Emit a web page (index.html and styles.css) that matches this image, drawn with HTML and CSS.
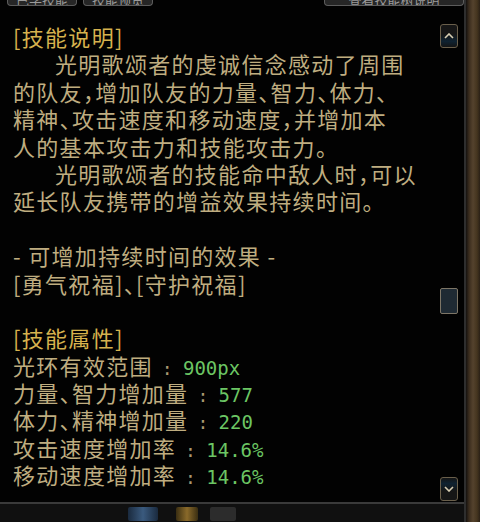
FILE: index.html
```html
<!DOCTYPE html>
<html lang="zh-CN">
<head>
    <meta charset="UTF-8">
    <meta name="viewport" content="width=device-width, initial-scale=1.0">
    <title>技能说明</title>
    <link rel="stylesheet" href="styles.css">
</head>
<body>
    <div class="window">
        <div class="panel">
            <!-- tab buttons, mostly scrolled out of view -->
            <div class="tabs">
                <div class="tab tab-small"><span>已学技能</span></div>
                <div class="tab tab-small"><span>技能预览</span></div>
                <div class="tab tab-wide"><span>查看技能树说明</span></div>
            </div>

            <div class="body">
                <div class="desc">
                    <div class="line title">[技能说明]</div>
                    <div class="line indent">光明歌颂者的虔诚信念感动了周围</div>
                    <div class="line">的队友，增加队友的力量、智力、体力、</div>
                    <div class="line">精神、攻击速度和移动速度，并增加本</div>
                    <div class="line">人的基本攻击力和技能攻击力。</div>
                    <div class="line indent">光明歌颂者的技能命中敌人时，可以</div>
                    <div class="line">延长队友携带的增益效果持续时间。</div>
                    <div class="line blank"></div>
                    <div class="line">- 可增加持续时间的效果 -</div>
                    <div class="line">[勇气祝福]、[守护祝福]</div>
                    <div class="line blank"></div>
                    <div class="line title">[技能属性]</div>
                    <div class="line">光环有效范围<span class="sep">:</span><span class="val">900px</span></div>
                    <div class="line">力量、智力增加量<span class="sep">:</span><span class="val">577</span></div>
                    <div class="line">体力、精神增加量<span class="sep">:</span><span class="val">220</span></div>
                    <div class="line">攻击速度增加率<span class="sep">:</span><span class="val">14.6%</span></div>
                    <div class="line">移动速度增加率<span class="sep">:</span><span class="val">14.6%</span></div>
                </div>

                <div class="scroll">
                    <div class="scroll-btn up">
                        <svg width="10" height="6" viewBox="0 0 10 6"><polyline points="1,5 5,1 9,5" fill="none" stroke="#d9cfb4" stroke-width="1.6"/></svg>
                    </div>
                    <div class="scroll-track">
                        <div class="scroll-thumb"></div>
                    </div>
                    <div class="scroll-btn down">
                        <svg width="10" height="6" viewBox="0 0 10 6"><polyline points="1,1 5,5 9,1" fill="none" stroke="#d9cfb4" stroke-width="1.6"/></svg>
                    </div>
                </div>
            </div>

            <!-- quick slot bar below the panel -->
            <div class="footer">
                <div class="slot slot-blue"></div>
                <div class="slot slot-gold"></div>
                <div class="slot slot-grey"></div>
            </div>
        </div>
        <div class="wood"></div>
    </div>
</body>
</html>
```

FILE: styles.css
```css
html, body {
    margin: 0;
    padding: 0;
    background-color: #000;
}
body {
    width: 480px;
    height: 522px;
    overflow: hidden;
    font-family: "Noto Sans CJK SC", "Noto Sans", sans-serif;
}
.window {
    display: flex;
    height: 522px;
}
.panel {
    width: 464px;
    display: flex;
    flex-direction: column;
    border-right: 2px solid #2e2e2e;
    background-color: #020202;
}

/* tabs */
.tabs {
    display: flex;
    gap: 6px;
    height: 6px;
    padding-left: 7px;
}
.tab {
    display: flex;
    align-items: flex-end;
    justify-content: center;
    overflow: hidden;
    box-sizing: border-box;
    border: 1px solid #5c5c5c;
    border-top: none;
    border-radius: 0 0 4px 4px;
    background-color: #262626;
}
.tab span {
    font-size: 13px;
    line-height: 13px;
    color: #9a9a9a;
    margin-bottom: -1px;
}
.tab-small {
    width: 70px;
}
.tab-wide {
    width: 140px;
    margin-left: auto;
}

/* main text area */
.body {
    flex: 1;
    display: flex;
}
.desc {
    flex: 1;
    padding: 17px 0 0 13px;
    font-size: 22px;
    line-height: 27.4px;
    letter-spacing: 1.3px;
    color: #bfad80;
    font-feature-settings: "halt";
}
.line {
    white-space: nowrap;
    height: 27.4px;
}
.indent {
    padding-left: 42px;
}
.title {
    color: #d6b24e;
}
.sep {
    display: inline-block;
    margin: 0 9px 0 9px;
    font-family: "DejaVu Sans Mono", monospace;
    font-size: 18px;
    color: #a89870;
}
.val {
    font-family: "DejaVu Sans Mono", monospace;
    font-size: 19px;
    letter-spacing: 0;
    color: #6cc664;
}

/* scroll bar */
.scroll {
    width: 18px;
    display: flex;
    flex-direction: column;
    padding: 18px 6px 1px 4px;
}
.scroll-btn {
    box-sizing: border-box;
    width: 18px;
    height: 24px;
    border: 1px solid #6a5f4b;
    border-radius: 3px;
    display: flex;
    justify-content: center;
}
.scroll-btn.up {
    align-items: flex-start;
    padding-top: 8px;
    background: linear-gradient(#161616 40%, #0f2231 75%, #141414);
}
.scroll-btn.down {
    align-items: flex-end;
    padding-bottom: 8px;
    background: linear-gradient(#141414, #0f2231 25%, #161616 60%);
}
.scroll-track {
    flex: 1;
}
.scroll-thumb {
    box-sizing: border-box;
    width: 18px;
    height: 26px;
    margin-top: 240px;
    border: 1px solid #7d7566;
    border-radius: 2px;
    background-color: #1f2a33;
}

/* bottom slot strip */
.footer {
    height: 15px;
    border-top: 2px solid #3a3a3a;
    background-color: #101010;
    display: flex;
    gap: 18px;
    padding: 3px 0 0 128px;
}
.slot {
    height: 14px;
    border-radius: 2px;
}
.slot-blue {
    width: 30px;
    background: linear-gradient(90deg, #1a2a3e, #3a5a7e 50%, #1a2a3e);
}
.slot-gold {
    width: 22px;
    background: linear-gradient(90deg, #3a2e12, #8a6a2a 50%, #3a2e12);
}
.slot-grey {
    width: 26px;
    margin-left: -6px;
    background-color: #2c2c2c;
}

/* wooden frame edge */
.wood {
    width: 14px;
    background: linear-gradient(90deg, #151210 0, #3a2c1d 3px, #54422d 7px, #45351f 11px, #2a2016 14px);
}
```
